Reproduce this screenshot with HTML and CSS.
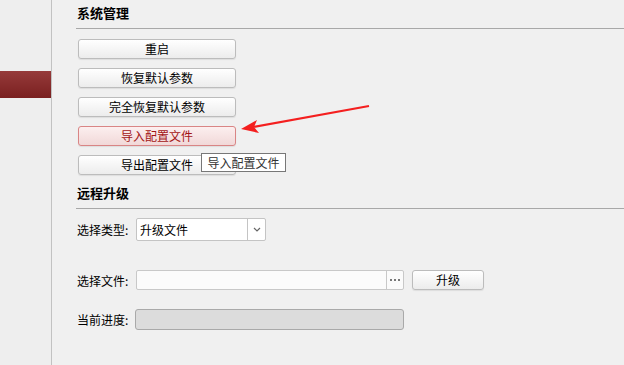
FILE: index.html
```html
<!DOCTYPE html>
<html lang="zh-CN">
<head>
<meta charset="UTF-8">
<title>系统维护</title>
<link rel="stylesheet" href="styles.css">
</head>
<body>
<div class="page">
<div class="side">
<div class="side-active"></div>
</div>
<div class="main">
<div class="title">系统管理</div>
<div class="btns">
<div class="btn">重启</div>
<div class="btn">恢复默认参数</div>
<div class="btn">完全恢复默认参数</div>
<div class="btn hot">导入配置文件</div>
<div class="btn">导出配置文件</div>
</div>
<div class="title title2">远程升级</div>
<div class="row r1">
<span class="lbl">选择类型:</span>
<div class="sel"><span class="sel-val">升级文件</span><span class="sel-arr"><svg width="8" height="5" viewBox="0 0 8 5"><path d="M1 1 L4 4 L7 1" fill="none" stroke="#666" stroke-width="1.2"/></svg></span></div>
</div>
<div class="row r2">
<span class="lbl">选择文件:</span>
<div class="file"><span class="file-box"></span><span class="file-dots"><svg width="10" height="3" viewBox="0 0 10 3"><rect x="0" y="0" width="2" height="2" fill="#777"/><rect x="4" y="0" width="2" height="2" fill="#777"/><rect x="8" y="0" width="2" height="2" fill="#777"/></svg></span></div>
<div class="btn up">升级</div>
</div>
<div class="row r3">
<span class="lbl">当前进度:</span>
<div class="prog"></div>
</div>
</div>
</div>

<div class="tip">导入配置文件</div>
<svg class="arrow" width="624" height="365" viewBox="0 0 624 365">
<line x1="369" y1="106" x2="250" y2="127.5" stroke="#f41f1f" stroke-width="2.2"/>
<polygon points="241,129 257,120 254,127 259,133" fill="#f41f1f"/>
</svg>
</body>
</html>
```

FILE: styles.css
```css
body{
margin:0;
background:#f0f0f0;
font-family:"Noto Sans CJK SC","DejaVu Sans",sans-serif;
font-size:12px;
color:#000;
}

.page{
display:flex;
height:365px;
}

.side{
width:52px;
flex:none;
border-right:1px solid #c2c2c2;
background:#eeeeee;
padding-top:71px;
box-sizing:border-box;
}

.side-active{
height:27px;
background:linear-gradient(#963a3a,#7a2020);
}

.main{
flex:1;
padding-left:24px;
}

.title{
font-size:13px;
font-weight:bold;
line-height:20px;
padding:3px 0 5px 1px;
border-bottom:1px solid #a8a8a8;
}

.title2{
margin-top:5px;
}

.btns{
display:flex;
flex-direction:column;
gap:9px;
padding:10px 0 0 2px;
}

.btn{
width:156px;
height:18px;
line-height:18px;
text-align:center;
border:1px solid #bcbcbc;
border-radius:3px;
background:linear-gradient(#ffffff,#ececec);
box-shadow:0 1px 1px rgba(0,0,0,0.08);
}

.btn.hot{
border-color:#d98585;
background:linear-gradient(#fcefef,#f1d8d8);
color:#a31515;
}

.row{
display:flex;
align-items:center;
padding-left:1px;
}

.r1{margin-top:9px;}
.r2{margin-top:29px;}
.r3{margin-top:19px;}

.lbl{
width:59px;
flex:none;
}

.sel{
display:flex;
width:128px;
height:21px;
border:1px solid #c4c4c4;
border-radius:2px;
background:#fff;
}

.sel-val{
flex:1;
line-height:21px;
padding-left:3px;
}

.sel-arr{
width:17px;
border-left:1px solid #c4c4c4;
display:flex;
align-items:center;
justify-content:center;
}

.file{
display:flex;
width:266px;
height:18px;
border:1px solid #c8c8c8;
border-radius:2px;
background:#fbfbfb;
}

.file-box{flex:1;}

.file-dots{
width:16px;
flex:none;
border-left:1px solid #c8c8c8;
display:flex;
align-items:center;
justify-content:center;
}

.btn.up{
width:70px;
margin-left:8px;
}

.prog{
width:267px;
height:19px;
border:1px solid #a9a9a9;
border-radius:3px;
background:#dcdcdc;
margin-left:-1px;
}

.tip{
position:absolute;
left:201px;
top:153px;
width:83px;
height:17px;
line-height:17px;
border:1px solid #777;
background:#fff;
color:#333;
text-align:center;
}

.arrow{
position:absolute;
left:0;
top:0;
pointer-events:none;
}
```
